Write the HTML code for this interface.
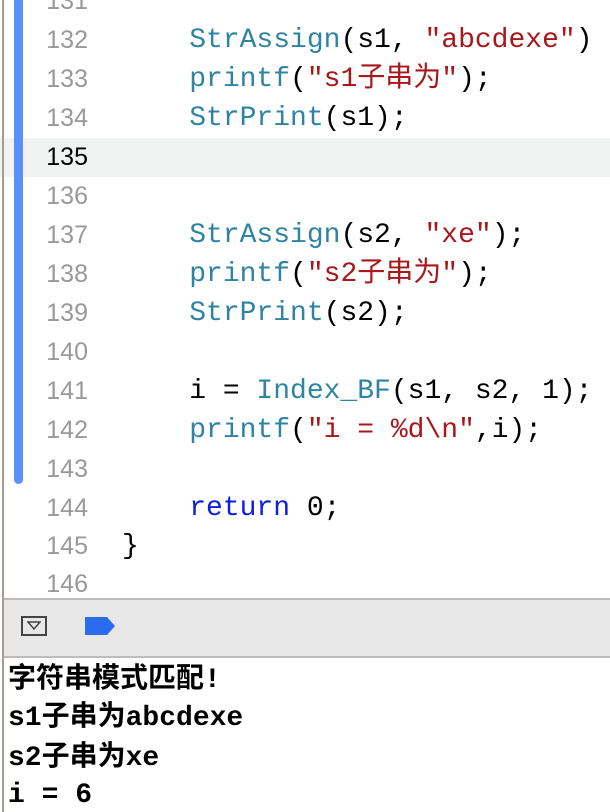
<!DOCTYPE html>
<html><head><meta charset="utf-8"><style>
body{margin:0;width:610px;height:812px;overflow:hidden;background:#fff;position:relative;font-family:"Liberation Mono","Noto Sans CJK SC",monospace;}
.lb{position:absolute;left:2px;top:0;width:2px;height:812px;background:#a89c92;}
.bar{position:absolute;left:14px;top:0;width:9px;height:484px;background:#5b8ff9;border-radius:0 0 5px 5px;}
.row{position:absolute;left:0;width:610px;height:39px;line-height:39px;font-size:28px;white-space:pre;}
.n{position:absolute;left:30px;width:58px;text-align:right;color:#999;font-size:25px;font-family:"Liberation Sans",sans-serif;}
.c{position:absolute;left:122px;color:#000;}
.f{color:#2f84a3}.s{color:#a8171a}.k{color:#0b1fe0}
.hl{background:#f1f3f3}
.hl .n{color:#000}
.tb{position:absolute;left:4px;top:598px;width:606px;height:60px;background:#e8e8e8;border-top:2px solid #bdbdbd;border-bottom:2px solid #bdbdbd;box-sizing:border-box;}
.out{position:absolute;left:8px;font:bold 28px "Liberation Mono","Noto Sans CJK SC",monospace;color:#000;white-space:pre;line-height:32px;}
</style></head><body>
<div class="row" style="top:-18px"><span class="n">131</span></div>
<div class="row" style="top:21px"><span class="n">132</span><span class="c">    <span class="f">StrAssign</span>(s1, <span class="s">"abcdexe"</span>)</span></div>
<div class="row" style="top:60px"><span class="n">133</span><span class="c">    <span class="f">printf</span>(<span class="s">"s1子串为"</span>);</span></div>
<div class="row" style="top:99px"><span class="n">134</span><span class="c">    <span class="f">StrPrint</span>(s1);</span></div>
<div class="row hl" style="top:138px"><span class="n">135</span></div>
<div class="row" style="top:177px"><span class="n">136</span></div>
<div class="row" style="top:216px"><span class="n">137</span><span class="c">    <span class="f">StrAssign</span>(s2, <span class="s">"xe"</span>);</span></div>
<div class="row" style="top:255px"><span class="n">138</span><span class="c">    <span class="f">printf</span>(<span class="s">"s2子串为"</span>);</span></div>
<div class="row" style="top:294px"><span class="n">139</span><span class="c">    <span class="f">StrPrint</span>(s2);</span></div>
<div class="row" style="top:333px"><span class="n">140</span></div>
<div class="row" style="top:372px"><span class="n">141</span><span class="c">    i = <span class="f">Index_BF</span>(s1, s2, 1);</span></div>
<div class="row" style="top:411px"><span class="n">142</span><span class="c">    <span class="f">printf</span>(<span class="s">"i = %d\n"</span>,i);</span></div>
<div class="row" style="top:450px"><span class="n">143</span></div>
<div class="row" style="top:489px"><span class="n">144</span><span class="c">    <span class="k">return</span> 0;</span></div>
<div class="row" style="top:527px"><span class="n">145</span><span class="c">}</span></div>
<div class="row" style="top:565px"><span class="n">146</span></div>
<div class="lb"></div>
<div class="bar"></div>
<div class="tb">
<div style="position:absolute;left:17px;top:16px;width:26px;height:20px;border:2px solid #444;box-sizing:border-box;"></div>
<svg style="position:absolute;left:23px;top:21px" width="14" height="10"><path d="M1 1 L13 1 L7 8 Z" fill="none" stroke="#444" stroke-width="1.5"/></svg>
<svg style="position:absolute;left:81px;top:17px" width="32" height="20"><path d="M0 0 H22 L30 9 L22 18 H0 Z" fill="#2a6cf0"/></svg>
</div>
<div class="out" style="top:665px">字符串模式匹配!</div>
<div class="out" style="top:703px">s1子串为abcdexe</div>
<div class="out" style="top:743px">s2子串为xe</div>
<div class="out" style="top:780px">i = 6</div>
</body></html>
